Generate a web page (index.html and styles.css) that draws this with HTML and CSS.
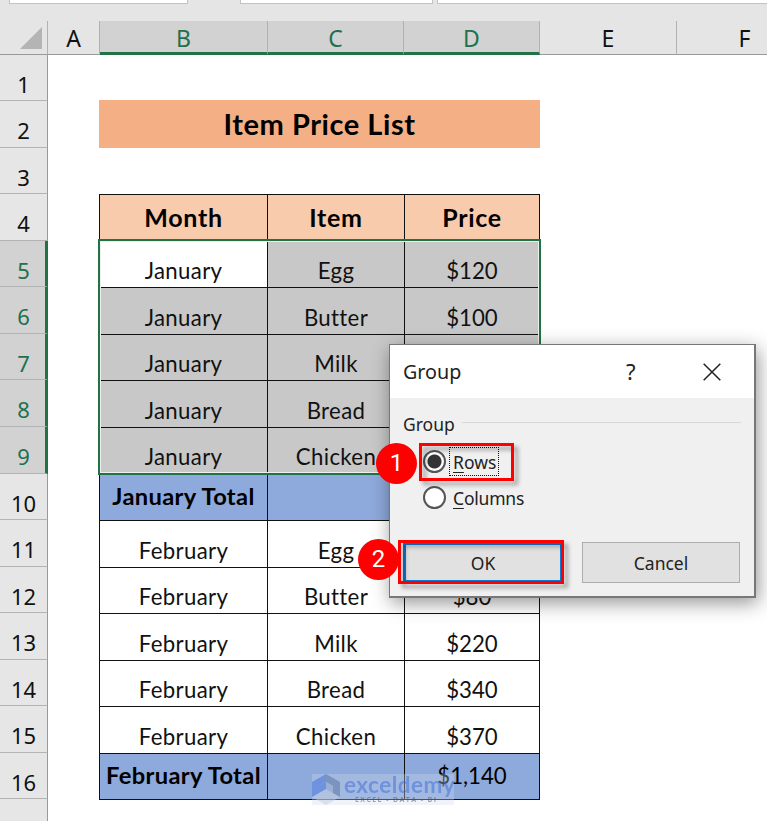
FILE: index.html
```html
<!DOCTYPE html>
<html lang="en">
<head>
<meta charset="utf-8">
<title>Item Price List</title>
<link rel="stylesheet" href="styles.css">
</head>
<body>
<main class="app">
  <div class="formula-bar"><i></i><i></i><i></i></div>
  <div class="col-heads">
    <div class="corner"><svg width="22" height="22" viewBox="0 0 22 22"><path d="M22 0V22H0Z" fill="#b4b4b4"/></svg></div>
    <div>A</div><div class="on">B</div><div class="on">C</div><div class="on">D</div><div>E</div><div>F</div>
  </div>
  <div class="sheet">
    <div class="row-heads">
      <div>1</div><div>2</div><div>3</div><div>4</div>
      <div class="on">5</div><div class="on">6</div><div class="on">7</div><div class="on">8</div><div class="on">9</div>
      <div>10</div><div>11</div><div>12</div><div>13</div><div>14</div><div>15</div><div>16</div><div></div>
    </div>
    <div class="cells">
      <h1 class="title"><span>Item Price List</span></h1>
      <div class="table">
        <div class="row head"><b>Month</b><b>Item</b><b>Price</b></div>
        <div class="row sel"><span class="active">January</span><span>Egg</span><span class="num">$120</span></div>
        <div class="row sel"><span>January</span><span>Butter</span><span class="num">$100</span></div>
        <div class="row sel"><span>January</span><span>Milk</span><span class="num"></span></div>
        <div class="row sel"><span>January</span><span>Bread</span><span class="num"></span></div>
        <div class="row sel"><span>January</span><span>Chicken</span><span class="num"></span></div>
        <div class="row total"><b>January Total</b><span></span><span></span></div>
        <div class="row"><span>February</span><span>Egg</span><span class="num"></span></div>
        <div class="row"><span>February</span><span>Butter</span><span class="num">$80</span></div>
        <div class="row"><span>February</span><span>Milk</span><span class="num">$220</span></div>
        <div class="row"><span>February</span><span>Bread</span><span class="num">$340</span></div>
        <div class="row"><span>February</span><span>Chicken</span><span class="num">$370</span></div>
        <div class="row total"><b>February Total</b><span></span><span class="num">$1,140</span></div>
        <div class="selection"></div>
      </div>
    </div>
  </div>

  <div class="watermark">
    <svg width="28" height="31" viewBox="0 0 28 31"><path d="m0 23 14-8 14 8-14 8z" fill="#c3d0e2"/><path d="M14 0 0 8v15l7-4v-7l7-4z" fill="#5d86e0"/><path d="m14 0 14 8v15l-7-4v-7l-7-4z" fill="#7189ae"/><path d="m14 8-7 4v7l7-4z" fill="#5d86e0"/><path d="m14 8 7 4v7l-7-4z" fill="#9fb3d3"/></svg>
    <div><strong>exceldemy</strong><small>EXCEL - DATA - BI</small></div>
  </div>

  <section class="dialog">
    <header><span class="dialog-title">Group</span><span class="help">?</span>
      <svg width="18" height="18" viewBox="0 0 18 18"><path d="M.7.7l16.6 16.6M17.3.7.7 17.3" stroke="#222" stroke-width="1.5" fill="none"/></svg>
    </header>
    <div class="dialog-body">
      <div class="legend"><span>Group</span><hr></div>
      <div class="option first"><i class="radio checked"></i><span class="focus"><u>R</u>ows</span></div>
      <div class="option"><i class="radio"></i><span><u>C</u>olumns</span></div>
      <div class="buttons"><button class="ok">OK</button><button class="cancel">Cancel</button></div>
    </div>
  </section>

  <div class="mark mark-rows"></div>
  <div class="mark mark-ok"></div>
  <div class="badge one">1</div>
  <div class="badge two">2</div>
</main>
</body>
</html>
```
FILE: styles.css
```css
* { box-sizing: border-box; }
body { margin: 0; background: #fff; }
.app { position: relative; width: 767px; height: 821px; overflow: hidden; font-family: Lato, sans-serif; color: #111; }

.formula-bar { display: flex; height: 21px; padding-left: 9px; background: #e5e5e5; }
.formula-bar i { flex: none; width: 179px; height: 4px; background: #fff; border: solid #c3c3c3; border-width: 0 1px 1px; }
.formula-bar i:nth-child(2) { width: 193px; margin: 0 4px 0 52px; }
.formula-bar i:nth-child(3) { width: 340px; }

.col-heads { display: grid; grid-template-columns: 48px 52px 168px 136px 136px 137px 136px; grid-template-rows: 34px; height: 34px; background: #e5e5e5; }
.col-heads div { height: 34px; overflow: hidden; font: 23px/34px "Noto Sans", sans-serif; text-align: center; border-right: 1px solid #b1b1b1; border-bottom: 1px solid #999; }
.col-heads .on { background: #d2d2d2; color: #21714a; border-bottom: 3px solid #217346; }
.col-heads .corner { display: flex; padding: 6px 0 0 20px; }

.sheet { display: grid; grid-template-columns: 48px 1fr; height: 766px; }
.row-heads { display: grid; grid-template-rows: 46px repeat(16, 46.57px); background: #e6e6e6; }
.row-heads div { font: 22px/30px "Noto Sans", sans-serif; padding-top: 14px; text-align: center; border-right: 1px solid #999; border-bottom: 1px solid #b3b3b3; }
.row-heads .on { background: #d2d2d2; color: #21714a; border-right: 3px solid #217346; padding-left: 2px; }

.cells { padding: 45px 0 0 51px; }
.title { display: grid; place-items: center; width: 441px; height: 48px; margin: 0 0 46px; background: #f4b084; font-size: 29px; line-height: 34px; letter-spacing: .55px; color: #000; }

.table { position: relative; width: 441px; border-left: 1px solid #111; border-top: 1px solid #111; }
.row { display: grid; grid-template-columns: 168px 137px 135px; height: 46.57px; }
.row > * { display: flex; justify-content: center; align-items: flex-end; padding-bottom: 3px; border-right: 1px solid #111; border-bottom: 1px solid #111; font-size: 22.2px; line-height: 26px; letter-spacing: .35px; }
.row > .num { letter-spacing: 0; }
.row.head > * { background: #f8cbad; font-size: 25px; line-height: 30px; padding-bottom: 9px; color: #000; letter-spacing: .7px; }
.row.sel > * { background: #c8c8c8; }
.row.sel > .active { background: #fff; }
.row.total > * { background: #8ea9db; padding-bottom: 10px; color: #000; }
.row.total > b { padding-bottom: 11px; font-size: 23.7px; letter-spacing: .35px; white-space: nowrap; }
.selection { position: absolute; left: -2px; top: 44px; width: 443px; height: 236px; border: 2px solid #217346; box-shadow: inset 0 0 0 1px #eee; }

.watermark { position: absolute; left: 312px; top: 774px; width: 142px; height: 31px; display: flex; gap: 4px; background: rgba(210, 220, 235, .5); opacity: .65; color: #5d86e0; }
.watermark svg { flex: none; }
.watermark div { display: flex; flex-direction: column; }
.watermark strong { font: bold 22.5px/22px Lato, sans-serif; letter-spacing: .5px; }
.watermark small { margin-left: 11px; font: bold 7px/7px "Open Sans", sans-serif; letter-spacing: 1.4px; white-space: nowrap; color: #66758c; }

.dialog { position: absolute; left: 389px; top: 344px; width: 367px; height: 254px; border: 2px solid #777; border-width: 1px 2px 2px 1px; background: #f0f0f0; box-shadow: 2px 5px 18px rgba(0, 0, 0, .42); font-family: "Noto Sans", sans-serif; color: #222; }
.dialog header { display: flex; align-items: center; height: 53px; padding-left: 13px; background: #fff; }
.dialog-title { width: 222px; font-size: 19.7px; }
.help { width: 78px; padding: 0 0 2px 1px; font-size: 22px; }
.dialog-body { padding: 13px 13px 0; font-size: 17.5px; }
.legend { display: flex; align-items: center; gap: 7px; height: 26px; }
.legend hr { flex: 1; margin: 0 0 3px; border: 0; border-top: 1px solid #d8d8d8; }
.option { display: flex; align-items: center; height: 36px; padding-left: 20px; gap: 3px; }
.option.first { margin-top: 6px; }
.option span { height: 29px; line-height: 28px; padding: 0 2px 0 3px; border: 1px solid transparent; letter-spacing: -.2px; }
.option .focus { border: 1px dotted #111; letter-spacing: 0; }
.option u { text-underline-offset: 3px; text-decoration-thickness: 1px; }
.radio { width: 23px; height: 23px; border: 2px solid #555; border-radius: 50%; background: #fff; }
.radio.checked { background: radial-gradient(circle, #333 6.5px, #fff 7.5px); }
.buttons { display: grid; grid-template-columns: 160px 158px; column-gap: 19px; margin: 27px 0 0; }
.buttons button { height: 41px; padding: 0; border: 1px solid #adadad; background: #e1e1e1; font: 17.5px "Noto Sans", sans-serif; color: #222; }
.buttons .ok { border: 3px solid #0f78d4; }

.mark { position: absolute; border: 3px solid #f00; filter: drop-shadow(4px 4px 2px rgba(0, 0, 0, .35)); }
.mark-rows { left: 419px; top: 443px; width: 95px; height: 38px; }
.mark-ok { left: 398px; top: 540px; width: 166px; height: 44px; }
.badge { position: absolute; width: 41px; height: 41px; border-radius: 50%; background: #f00; color: #fff; font: 24px/41px Roboto, sans-serif; text-align: center; }
.badge.one { left: 376px; top: 443px; }
.badge.two { left: 358px; top: 539px; }
```
